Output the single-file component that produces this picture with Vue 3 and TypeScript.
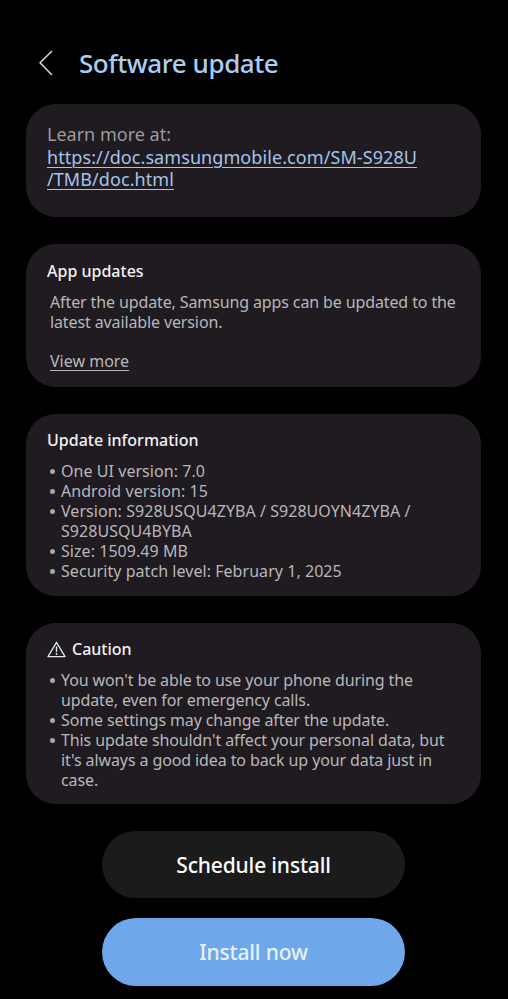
<script setup lang="ts">
const info: string[] = [
  'One UI version: 7.0',
  'Android version: 15',
  'Version: S928USQU4ZYBA / S928UOYN4ZYBA / S928USQU4BYBA',
  'Size: 1509.49 MB',
  'Security patch level: February 1, 2025',
]
const caution: string[] = [
  "You won't be able to use your phone during the update, even for emergency calls.",
  'Some settings may change after the update.',
  "This update shouldn't affect your personal data, but it's always a good idea to back up your data just in case.",
]
</script>

<template>
  <div class="page">
    <header class="header">
      <svg class="back" width="16" height="26" viewBox="0 0 16 26" fill="none">
        <path d="M13.5 1.5 L2 12.8 L13.5 24.5" stroke="#c9d6e6" stroke-width="1.6" stroke-linecap="round" stroke-linejoin="round" />
      </svg>
      <h1 class="title">Software update</h1>
    </header>

    <section class="card learn">
      <p class="muted">Learn more at:</p>
      <a class="link">https://doc.samsungmobile.com/SM-S928U<br />/TMB/doc.html</a>
    </section>

    <section class="card apps">
      <h2 class="heading">App updates</h2>
      <p class="body indent">After the update, Samsung apps can be updated to the latest available version.</p>
      <a class="more">View more</a>
    </section>

    <section class="card info">
      <h2 class="heading">Update information</h2>
      <ul class="list info-list">
        <li v-for="item in info" :key="item">{{ item }}</li>
      </ul>
    </section>

    <section class="card caution">
      <h2 class="heading caution-head">
        <svg width="19" height="17" viewBox="0 0 19 17" fill="none">
          <path d="M9.5 1.3 L18 15.7 H1 Z" stroke="#dfe6f2" stroke-width="1.3" stroke-linejoin="round" />
          <path d="M9.5 6 V10.5" stroke="#dfe6f2" stroke-width="1.4" stroke-linecap="round" />
          <circle cx="9.5" cy="13" r="0.9" fill="#dfe6f2" />
        </svg>
        Caution
      </h2>
      <ul class="list caution-list">
        <li v-for="item in caution" :key="item">{{ item }}</li>
      </ul>
    </section>

    <div class="actions">
      <button class="btn secondary">Schedule install</button>
      <button class="btn primary">Install now</button>
    </div>
  </div>
</template>

<style scoped>
.page {
  width: 508px;
  height: 999px;
  box-sizing: border-box;
  overflow: hidden;
  background: #000;
  padding: 0 27px 0 26px;
  font-family: "Noto Sans", "Open Sans", sans-serif;
  display: flex;
  flex-direction: column;
}
.header {
  height: 104px;
  display: flex;
  align-items: center;
  padding: 22px 0 0 12px;
  box-sizing: border-box;
}
.back { flex: none; }
.title {
  margin: 0 0 0 25px;
  color: #a9cdf3;
  font-size: 26px;
  font-weight: 500;
  letter-spacing: -0.43px;
}
.card {
  background: #1f1b20;
  border-radius: 30px;
  padding: 0 21px;
  box-sizing: border-box;
  margin-bottom: 27px;
}
.learn { height: 113px; padding-top: 19px; font-size: 18px; line-height: 22.5px; }
.apps { height: 143px; padding-top: 17px; }
.info { height: 182px; padding-top: 16px; }
.caution { height: 181px; padding-top: 16px; }
.muted { margin: 0; color: #9d9a9e; }
.link { color: #a4c4ea; text-decoration: underline; text-underline-offset: 3px; text-decoration-thickness: 1px; letter-spacing: 0.08px; }
.heading {
  margin: 0;
  color: #f1f1f3;
  font-size: 16px;
  line-height: 20px;
  font-weight: 500;
}
.caution-head { display: flex; align-items: center; gap: 6px; }
.body {
  margin: 11px 0 0;
  color: #b8b6ba;
  font-size: 16px;
  line-height: 20px;
  letter-spacing: -0.12px;
}
.indent { margin-left: 3px; }
.more {
  display: block;
  margin: 19px 0 0 3px;
  color: #b8b6ba;
  font-size: 16px;
  line-height: 20px;
  text-decoration: underline;
  text-underline-offset: 3px;
  text-decoration-thickness: 1px;
}
.list {
  margin: 11px 0 0;
  padding: 0 0 0 14px;
  list-style: none;
  color: #b8b6ba;
  font-size: 16px;
  line-height: 20px;
}
.info-list { letter-spacing: 0.05px; }
.caution-list { letter-spacing: -0.11px; }
.list li { position: relative; }
.list li::before {
  content: "";
  position: absolute;
  left: -11px;
  top: 8px;
  width: 5px;
  height: 5px;
  border-radius: 50%;
  background: #a9a7ab;
}
.actions {
  display: flex;
  flex-direction: column;
  align-items: center;
  gap: 20px;
}
.btn {
  width: 303px;
  height: 67px;
  border: none;
  border-radius: 34px;
  font-family: inherit;
  font-size: 21px;
  font-weight: 500;
  letter-spacing: -0.15px;
}
.secondary { background: #1b1b1b; color: #fbfbfb; }
.primary { background: #6ea8ea; color: #e6f2fe; height: 68px; }
</style>
